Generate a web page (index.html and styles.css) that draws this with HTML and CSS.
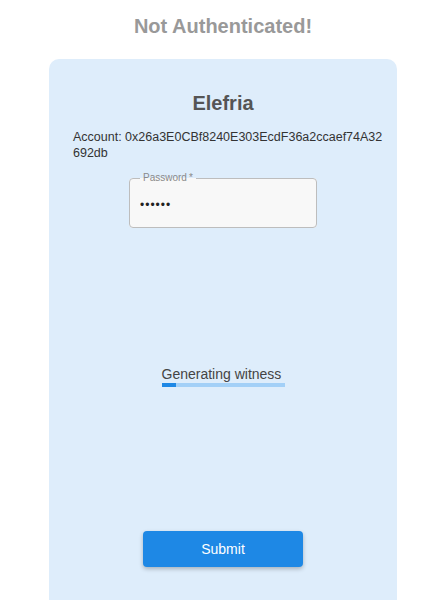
FILE: index.html
```html
<!DOCTYPE html>
<html lang="en">
<head>
<meta charset="utf-8">
<title>Not Authenticated</title>
<link rel="stylesheet" href="styles.css">
</head>
<body>
<h1 class="page-title">Not Authenticated!</h1>
<main class="card">
  <h2 class="card-title">Elefria</h2>
  <p class="account">Account: 0x26a3E0CBf8240E303EcdF36a2ccaef74A32692db</p>
  <fieldset class="field">
    <legend class="field-label">Password<span class="req">*</span></legend>
    <input class="field-input" type="password" value="123456" aria-label="Password">
  </fieldset>
  <div class="progress">
    <div class="progress-text">Generating witness</div>
    <div class="progress-track"><div class="progress-fill" style="width: 12%"></div></div>
  </div>
  <button class="submit" type="button">Submit</button>
</main>
</body>
</html>
```
FILE: styles.css
```css
html, body {
  margin: 0;
  padding: 0;
  background: #ffffff;
  font-family: "Liberation Sans", Arial, sans-serif;
}
body {
  height: 600px;
  overflow: hidden;
}
.page-title {
  margin: 14px 0 0;
  font-size: 20px;
  line-height: 24px;
  font-weight: bold;
  color: #999999;
  text-align: center;
}
.card {
  box-sizing: border-box;
  width: 348px;
  height: 560px;
  margin: 21px auto 0;
  padding: 32px 12px 0 24px;
  background: #deedfb;
  border-radius: 10px;
  display: flex;
  flex-direction: column;
  align-items: center;
}
.card-title {
  margin: 0 0 0 -12px;
  font-size: 20px;
  line-height: 24px;
  font-weight: bold;
  color: #555555;
}
.account {
  align-self: stretch;
  margin: 14px 0 0;
  font-size: 12.5px;
  line-height: 16px;
  color: #333333;
  word-break: break-all;
}
.field {
  box-sizing: border-box;
  width: 188px;
  height: 56px;
  margin: 11px 0 0 -12px;
  padding: 0 10px;
  border: 1px solid #bdbdbd;
  border-radius: 4px;
  background: #f8f8f8;
}
.field-label {
  margin-left: 0;
  padding: 0 3px;
  font-size: 10px;
  line-height: 12px;
  color: #8a8a8a;
}
.req {
  margin-left: 2px;
}
.field-input {
  box-sizing: border-box;
  width: 100%;
  height: 38px;
  margin-top: 2px;
  padding: 0;
  border: 0;
  background: transparent;
  font-family: "Liberation Sans", Arial, sans-serif;
  font-size: 12px;
  letter-spacing: 1px;
  color: #222222;
  outline: none;
}
.progress {
  width: 123px;
  margin: 138px 0 0 -12px;
}
.progress-text {
  font-size: 14px;
  line-height: 16px;
  color: #444444;
  white-space: nowrap;
}
.progress-track {
  margin-top: 1px;
  height: 4px;
  background: #a3d0f7;
}
.progress-fill {
  height: 100%;
  background: #1e88e5;
}
.submit {
  width: 160px;
  height: 36px;
  margin: 144px 0 0 -12px;
  border: 0;
  border-radius: 4px;
  background: #1e88e5;
  color: #ffffff;
  font-family: "Liberation Sans", Arial, sans-serif;
  font-size: 14px;
  box-shadow: 0 2px 4px rgba(0, 0, 0, 0.25);
}
```
